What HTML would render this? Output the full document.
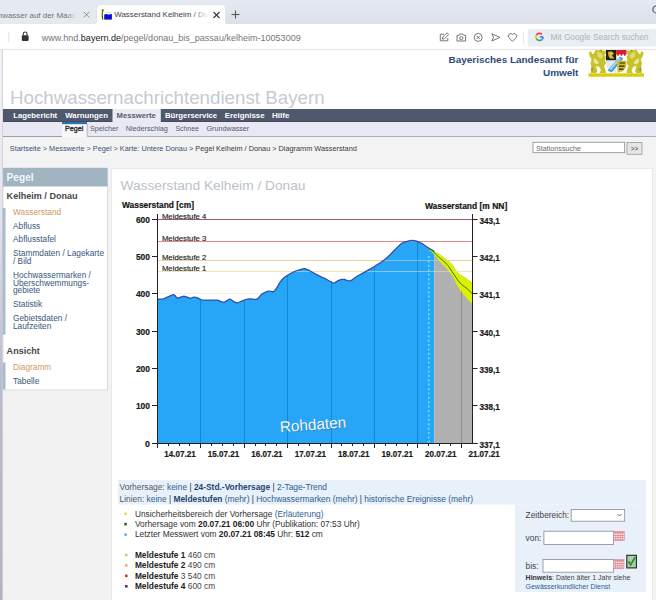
<!DOCTYPE html>
<html><head><meta charset="utf-8"><title>Wasserstand Kelheim / Donau</title>
<style>
html,body{margin:0;padding:0;width:656px;height:600px;overflow:hidden;background:#f0f0f0}
svg{position:absolute;left:0;top:0;display:block}
text{font-family:"Liberation Sans", sans-serif;}
</style></head><body>
<svg width="656" height="600" viewBox="0 0 656 600">
<defs><linearGradient id="tabbg" x1="0" y1="0" x2="0" y2="1"><stop offset="0" stop-color="#e5e9f1"/><stop offset="1" stop-color="#dce1e9"/></linearGradient></defs>
<rect x="0" y="0" width="656" height="24.5" fill="url(#tabbg)" />
<rect x="0" y="7" width="96" height="17.5" fill="#e6e9ef" />
<path d="M95,24 Q97,24 97,21 L97,9 Q97,5 101,5 L221,5 Q225,5 225,9 L225,21 Q225,24 227,24 Z" fill="#ffffff" stroke="none" stroke-width="1" />
<defs><linearGradient id="fadeL" x1="0" x2="1"><stop offset="0.88" stop-color="#6e7178"/><stop offset="1" stop-color="#6e7178" stop-opacity="0"/></linearGradient><linearGradient id="fadeA" x1="0" x2="1"><stop offset="0.82" stop-color="#3c4043"/><stop offset="1" stop-color="#3c4043" stop-opacity="0"/></linearGradient></defs>
<text x="-2.2" y="17.5" font-size="7.9" fill="url(#fadeL)" text-anchor="start" textLength="78" lengthAdjust="spacingAndGlyphs" ><tspan>hwasser auf der Maas</tspan></text>
<line x1="83.8" y1="12.0" x2="89.2" y2="17.4" stroke="#80838a" stroke-width="0.9" />
<line x1="89.2" y1="12.0" x2="83.8" y2="17.4" stroke="#80838a" stroke-width="0.9" />
<rect x="105" y="12" width="7" height="2.2" fill="#d8f4e8" />
<rect x="104.2" y="14" width="7.7" height="5.6" fill="#0a10d8" />
<path d="M104.2,14.8 Q105.5,13.6 107,14.2 Q108.5,14.8 111.9,14 L111.9,13.6 L104.2,13.6Z" fill="#ffffff" stroke="none" stroke-width="1" />
<path d="M100.8,10 L102.5,9 L104,9.5 L103.2,12 L102.8,15 L103.6,19.8 L101.6,19.8 L101.2,15 Z" fill="#e8f070" stroke="none" stroke-width="1" />
<path d="M102.2,9.4 L103.8,9.6 L103,12 L102.6,15 L103.3,19.6 L102.2,19.6 L101.8,15 L102.3,11.5 Z" fill="#3a3a08" stroke="none" stroke-width="1" />
<text x="114.2" y="17.4" font-size="7.97" fill="url(#fadeA)" text-anchor="start" textLength="94" lengthAdjust="spacingAndGlyphs" ><tspan>Wasserstand Kelheim / Do</tspan></text>
<line x1="213.5" y1="12" x2="219.5" y2="18" stroke="#3c4043" stroke-width="1.2" />
<line x1="219.5" y1="12" x2="213.5" y2="18" stroke="#3c4043" stroke-width="1.2" />
<line x1="235.5" y1="10.5" x2="235.5" y2="18.5" stroke="#55595e" stroke-width="1.1" />
<line x1="231.5" y1="14.5" x2="239.5" y2="14.5" stroke="#55595e" stroke-width="1.1" />
<path d="M656.5,5.8 A3.6,3.6 0 0 0 656.5,13" fill="none" stroke="#55595e" stroke-width="1.2" />
<rect x="0" y="24" width="656" height="26" fill="#ffffff" />
<rect x="0" y="49.3" width="656" height="1.2" fill="#d6d7da" />
<line x1="8.7" y1="32" x2="8.7" y2="42" stroke="#e2e3e5" stroke-width="1" />
<path d="M23.3,35.5 L23.3,33.8 A1.85,1.85 0 0 1 27,33.8 L27,35.5" fill="none" stroke="#3a3a3a" stroke-width="1.1" />
<rect x="21.8" y="35.3" width="6.8" height="5.6" fill="#333333" rx="0.8"/>
<text x="41.7" y="40.5" font-size="9.0" fill="#333" text-anchor="start" textLength="259" lengthAdjust="spacingAndGlyphs" ><tspan fill="#767676">www.hnd.</tspan><tspan fill="#202124">bayern.de</tspan><tspan fill="#767676">/pegel/donau_bis_passau/kelheim-10053009</tspan></text>
<path d="M444,34.2 L440.3,34.2 L440.3,40.8 L447.8,40.8 L447.8,38" fill="none" stroke="#6c7075" stroke-width="0.95" />
<path d="M442.3,39.2 L442.8,37 L447,32.8 L448.7,34.5 L444.5,38.7 Z" fill="none" stroke="#6c7075" stroke-width="0.95" stroke-linejoin="round"/>
<path d="M457,35.4 L458.8,35.4 L459.8,34 L462.8,34 L463.8,35.4 L465.6,35.4 L465.6,41 L457,41 Z" fill="none" stroke="#6c7075" stroke-width="0.95" stroke-linejoin="round"/>
<circle cx="461.3" cy="38.1" r="1.6" fill="none" stroke="#6c7075" stroke-width="0.95"/>
<circle cx="478.2" cy="37.4" r="4.0" fill="none" stroke="#6c7075" stroke-width="0.95"/>
<line x1="476.6" y1="35.8" x2="479.8" y2="39.0" stroke="#6c7075" stroke-width="0.95" />
<line x1="479.8" y1="35.8" x2="476.6" y2="39.0" stroke="#6c7075" stroke-width="0.95" />
<path d="M491.8,33.8 L500,37.4 L491.8,41 L493.6,37.4 Z" fill="none" stroke="#6c7075" stroke-width="0.95" stroke-linejoin="round"/>
<path d="M512.5,41.4 L508.8,37.6 A2.2,2.2 0 0 1 512.5,34.5 A2.2,2.2 0 0 1 516.2,37.6 Z" fill="none" stroke="#6c7075" stroke-width="0.95" stroke-linejoin="round"/>
<line x1="523.5" y1="32" x2="523.5" y2="43" stroke="#e6e7e9" stroke-width="1" />
<rect x="528" y="28.9" width="128" height="17.7" fill="#e9edf4" rx="1"/>
<g transform="translate(539.5,36.9) scale(1.2)"><path d="M3.1,0 L0.2,0" fill="none" stroke="#4285f4" stroke-width="1.4"/><path d="M3.0,0 A3,3 0 0 1 2.1,2.15" fill="none" stroke="#4285f4" stroke-width="1.4"/><path d="M2.1,-2.15 A3,3 0 0 0 -2.6,-1.5" fill="none" stroke="#ea4335" stroke-width="1.4"/><path d="M-2.6,-1.5 A3,3 0 0 0 -2.6,1.5" fill="none" stroke="#fbbc05" stroke-width="1.4"/><path d="M-2.6,1.5 A3,3 0 0 0 2.1,2.15" fill="none" stroke="#34a853" stroke-width="1.4"/></g>
<text x="550.5" y="40.0" font-size="8.3" fill="#b0b4ba" text-anchor="start" textLength="98" lengthAdjust="spacingAndGlyphs" ><tspan>Mit Google Search suchen</tspan></text>
<rect x="0" y="50" width="656" height="550" fill="#f2f2f2" />
<defs><linearGradient id="lstrip" x1="0" y1="0" x2="0" y2="1"><stop offset="0" stop-color="#f2f2f6"/><stop offset="0.3" stop-color="#e4e4ec"/><stop offset="0.6" stop-color="#bcbccb"/><stop offset="1" stop-color="#b2b2c2"/></linearGradient></defs>
<rect x="0" y="50" width="2.3" height="550" fill="url(#lstrip)" />
<rect x="2.3" y="50" width="0.8" height="550" fill="#c8c8d4" />
<rect x="3" y="50" width="653" height="59" fill="#ffffff" />
<text x="10.0" y="104" font-size="18.6" fill="#c6cad2" text-anchor="start" textLength="314.6" lengthAdjust="spacingAndGlyphs" ><tspan>Hochwassernachrichtendienst Bayern</tspan></text>
<text x="578.4" y="62.9" font-size="9.95" fill="#2b4a78" text-anchor="end" font-weight="700"><tspan>Bayerisches Landesamt für</tspan></text>
<text x="578.4" y="76" font-size="9.95" fill="#2b4a78" text-anchor="end" font-weight="700"><tspan>Umwelt</tspan></text>
<g><rect x="588.5" y="73.4" width="55.5" height="3.3" fill="#dccc08"/><path d="M596,49.8 L599,50.5 L601,49.8 L603,50.8 L605.5,50.5 L606,53 L604.5,55 L606,57 L605,60 L606,63 L604,66 L605.5,70 L606,73.3 L599.5,73.3 L601,70 L599,66.5 L596.5,68 L597.5,71 L596,73.3 L590.5,73.3 L592.5,69 L590.5,64 L591.5,59 L589.5,56 L589,52.5 L591,51 L592.5,54.5 L594,53 Z" fill="#c8c22a"/><path d="M597,52 L601,53 L603,56 L601,59 L598,57 Z" fill="#e2dc6a"/><path d="M594,58 L597,60 L599,63 L596,64.5 L593.5,62 Z" fill="#ece69a"/><path d="M596,66 L599,66.5 L598,70 L596.5,69 Z" fill="#f4f2d8"/><path d="M591.5,66 L593.5,69 L592.5,72 L590.8,71 Z" fill="#a89e22"/><path d="M599,50 L602,50 L601.5,52 Z" fill="#b89018"/><g transform="translate(1232.5,0) scale(-1,1)"><path d="M596,49.8 L599,50.5 L601,49.8 L603,50.8 L605.5,50.5 L606,53 L604.5,55 L606,57 L605,60 L606,63 L604,66 L605.5,70 L606,73.3 L599.5,73.3 L601,70 L599,66.5 L596.5,68 L597.5,71 L596,73.3 L590.5,73.3 L592.5,69 L590.5,64 L591.5,59 L589.5,56 L589,52.5 L591,51 L592.5,54.5 L594,53 Z" fill="#c8c22a"/><path d="M597,52 L601,53 L603,56 L601,59 L598,57 Z" fill="#e2dc6a"/><path d="M594,58 L597,60 L599,63 L596,64.5 L593.5,62 Z" fill="#ece69a"/><path d="M596,66 L599,66.5 L598,70 L596.5,69 Z" fill="#f4f2d8"/><path d="M591.5,66 L593.5,69 L592.5,72 L590.8,71 Z" fill="#a89e22"/><path d="M599,50 L602,50 L601.5,52 Z" fill="#b89018"/></g><path d="M606,50 L626.5,50 L626.5,64 Q626.5,71.5 616.2,73 Q606,71.5 606,64 Z" fill="#ffffff"/><rect x="606" y="50" width="10.2" height="10.5" fill="#262014"/><path d="M608,52 L611.5,51.3 L614,53.5 L612,55.5 L614.5,58.5 L610,58.5 L608.5,56 Z" fill="#d4bc3a"/><path d="M616.2,50 L626.5,50 L626.5,53.8 L624.8,56.3 L623.1,53.8 L621.4,56.3 L619.7,53.8 L618,56.3 L616.2,53.8 Z" fill="#dc1a30"/><path d="M606,60.5 L616.2,60.5 L616.2,73 Q606,71.5 606,64 Z" fill="#dfeaf4"/><path d="M607.5,70.5 L620,56.5 L623.5,58.5 L611.5,72.5 Z" fill="#4a9ed8"/><path d="M609.5,69 L619.5,58 L620.8,59 L610.8,70 Z" fill="#b6dcf2"/><path d="M616.8,60.8 L626.5,60.8 L626.5,64 Q626.5,71.5 617.5,72.8 Z" fill="#d2bc2c"/><path d="M619.5,63 L625,63 M619,66.2 L624.5,66.2 M619,69.2 L623.5,69.2" stroke="#2a2418" stroke-width="1.2"/></g>
<rect x="3" y="109" width="653" height="13" fill="#50586e" />
<rect x="3" y="121" width="653" height="1" fill="#434a5c" />
<rect x="112.5" y="109" width="48.3" height="13" fill="#e8eaf4" />
<text x="13.3" y="118.3" font-size="7.75" fill="#ffffff" text-anchor="start" textLength="43.9" lengthAdjust="spacingAndGlyphs" font-weight="700"><tspan>Lagebericht</tspan></text>
<text x="65.2" y="118.3" font-size="7.75" fill="#ffffff" text-anchor="start" textLength="42.8" lengthAdjust="spacingAndGlyphs" font-weight="700"><tspan>Warnungen</tspan></text>
<text x="116.6" y="118.3" font-size="7.75" fill="#585c66" text-anchor="start" textLength="39.3" lengthAdjust="spacingAndGlyphs" font-weight="700"><tspan>Messwerte</tspan></text>
<text x="165" y="118.3" font-size="7.75" fill="#ffffff" text-anchor="start" textLength="52.2" lengthAdjust="spacingAndGlyphs" font-weight="700"><tspan>Bürgerservice</tspan></text>
<text x="224.8" y="118.3" font-size="7.75" fill="#ffffff" text-anchor="start" textLength="39.7" lengthAdjust="spacingAndGlyphs" font-weight="700"><tspan>Ereignisse</tspan></text>
<text x="272" y="118.3" font-size="7.75" fill="#ffffff" text-anchor="start" textLength="17.5" lengthAdjust="spacingAndGlyphs" font-weight="700"><tspan>Hilfe</tspan></text>
<rect x="3" y="122" width="653" height="14" fill="#e8e9f4" />
<rect x="3" y="136" width="59" height="1" fill="#9a9eaa" />
<rect x="88" y="136" width="568" height="1" fill="#a8acb8" />
<rect x="62" y="122" width="25" height="2.4" fill="#2a70b4" />
<rect x="62" y="124.4" width="25" height="12.6" fill="#f8f8fb" />
<rect x="86.6" y="124" width="1.6" height="13" fill="#c0c3cc" />
<text x="65" y="131.3" font-size="7.2" fill="#2a2a2a" text-anchor="start" textLength="18.4" lengthAdjust="spacingAndGlyphs" stroke="#2a2a2a" stroke-width="0.3"><tspan>Pegel</tspan></text>
<text x="90" y="131.3" font-size="7.2" fill="#555a66" text-anchor="start" textLength="28.4" lengthAdjust="spacingAndGlyphs" ><tspan>Speicher</tspan></text>
<text x="125.7" y="131.3" font-size="7.2" fill="#555a66" text-anchor="start" textLength="42.1" lengthAdjust="spacingAndGlyphs" ><tspan>Niederschlag</tspan></text>
<text x="175.4" y="131.3" font-size="7.2" fill="#555a66" text-anchor="start" textLength="23.5" lengthAdjust="spacingAndGlyphs" ><tspan>Schnee</tspan></text>
<text x="206.5" y="131.3" font-size="7.2" fill="#555a66" text-anchor="start" textLength="42.7" lengthAdjust="spacingAndGlyphs" ><tspan>Grundwasser</tspan></text>
<rect x="3" y="137" width="653" height="31" fill="#f3f3f3" />
<text x="9.8" y="150.8" font-size="7.32" fill="#333" text-anchor="start" textLength="347" lengthAdjust="spacingAndGlyphs" ><tspan fill="#34537a">Startseite</tspan><tspan fill="#555"> &gt; </tspan><tspan fill="#34537a">Messwerte</tspan><tspan fill="#555"> &gt; </tspan><tspan fill="#34537a">Pegel</tspan><tspan fill="#555"> &gt; </tspan><tspan fill="#34537a">Karte: Untere Donau</tspan><tspan fill="#3a3a3a"> &gt; Pegel Kelheim / Donau &gt; Diagramm Wasserstand</tspan></text>
<rect x="533" y="142.3" width="91.7" height="10.4" fill="#ffffff" stroke="#8a8a8a" stroke-width="0.8"/>
<text x="536" y="150.5" font-size="7.16" fill="#6a6a6a" text-anchor="start" textLength="45" lengthAdjust="spacingAndGlyphs" ><tspan>Stationssuche</tspan></text>
<rect x="627" y="142.5" width="15" height="11.8" fill="#e6e6e6" stroke="#9a9a9a" stroke-width="0.8"/>
<text x="634.5" y="150.8" font-size="6.5" fill="#333" text-anchor="middle" ><tspan>&gt;&gt;</tspan></text>
<rect x="3" y="168" width="104.5" height="222" fill="#ffffff" stroke="#d6d6d6" stroke-width="0.8"/>
<rect x="3" y="168" width="104.5" height="18.5" fill="#a0b4c2" />
<text x="6.6" y="181.2" font-size="10.1" fill="#f4f7fa" text-anchor="start" textLength="27" lengthAdjust="spacingAndGlyphs" font-weight="700"><tspan>Pegel</tspan></text>
<text x="6.6" y="199" font-size="9.05" fill="#474747" text-anchor="start" textLength="71" lengthAdjust="spacingAndGlyphs" font-weight="700"><tspan>Kelheim / Donau</tspan></text>
<rect x="2.5" y="208" width="3" height="126.5" fill="#a9bccc" />
<text x="13" y="215.4" font-size="8.3" fill="#cc9a60" text-anchor="start" textLength="48.2" lengthAdjust="spacingAndGlyphs" ><tspan>Wasserstand</tspan></text>
<text x="13" y="228.9" font-size="8.3" fill="#36587c" text-anchor="start" ><tspan>Abfluss</tspan></text>
<text x="13" y="242.3" font-size="8.3" fill="#36587c" text-anchor="start" ><tspan>Abflusstafel</tspan></text>
<text x="13" y="256.2" font-size="8.3" fill="#36587c" text-anchor="start" textLength="91" lengthAdjust="spacingAndGlyphs" ><tspan>Stammdaten / Lagekarte</tspan></text>
<text x="13" y="264.1" font-size="8.3" fill="#36587c" text-anchor="start" ><tspan>/ Bild</tspan></text>
<text x="13" y="278.4" font-size="8.3" fill="#36587c" text-anchor="start" ><tspan>Hochwassermarken /</tspan></text>
<text x="13" y="286.0" font-size="8.3" fill="#36587c" text-anchor="start" ><tspan>Überschwemmungs-</tspan></text>
<text x="13" y="293.2" font-size="8.3" fill="#36587c" text-anchor="start" ><tspan>gebiete</tspan></text>
<text x="13" y="307.0" font-size="8.3" fill="#36587c" text-anchor="start" ><tspan>Statistik</tspan></text>
<text x="13" y="321.2" font-size="8.3" fill="#36587c" text-anchor="start" ><tspan>Gebietsdaten /</tspan></text>
<text x="13" y="328.8" font-size="8.3" fill="#36587c" text-anchor="start" ><tspan>Laufzeiten</tspan></text>
<text x="6.6" y="353.5" font-size="9.05" fill="#474747" text-anchor="start" font-weight="700"><tspan>Ansicht</tspan></text>
<rect x="2.5" y="362.5" width="3" height="27" fill="#a9bccc" />
<text x="13" y="369.5" font-size="8.3" fill="#cc9a60" text-anchor="start" ><tspan>Diagramm</tspan></text>
<text x="13" y="383.5" font-size="8.3" fill="#36587c" text-anchor="start" ><tspan>Tabelle</tspan></text>
<rect x="111.5" y="168.5" width="541" height="440" fill="#ffffff" stroke="#e6e6e6" stroke-width="0.8"/>
<text x="120.5" y="189.7" font-size="13.7" fill="#bac1c9" text-anchor="start" textLength="185" lengthAdjust="spacingAndGlyphs" ><tspan>Wasserstand Kelheim / Donau</tspan></text>
<clipPath id="plot"><rect x="157" y="200" width="315.5" height="243.5"/></clipPath>
<g clip-path="url(#plot)">
<line x1="157" y1="219.5" x2="472.5" y2="219.5" stroke="#9a5a80" stroke-width="1" />
<line x1="157" y1="241.5" x2="472.5" y2="241.5" stroke="#e48888" stroke-width="1" />
<line x1="157" y1="260.5" x2="472.5" y2="260.5" stroke="#ecd49c" stroke-width="1" />
<line x1="157" y1="271.5" x2="472.5" y2="271.5" stroke="#f0e6b4" stroke-width="1" />
<line x1="157" y1="293.5" x2="472.5" y2="293.5" stroke="#f6eee6" stroke-width="1" />
<path d="M157.30,299.10 C158.18,299.10 161.08,299.35 162.60,299.10 C164.12,298.85 164.68,298.30 166.40,297.60 C168.12,296.90 171.50,295.28 172.90,294.90 C174.30,294.52 174.03,294.78 174.80,295.30 C175.57,295.82 176.10,297.83 177.50,298.00 C178.90,298.17 181.75,296.50 183.20,296.30 C184.65,296.10 185.05,296.47 186.20,296.80 C187.35,297.13 188.82,298.23 190.10,298.30 C191.38,298.37 192.77,297.32 193.90,297.20 C195.03,297.08 195.77,297.22 196.90,297.60 C198.03,297.98 199.55,299.07 200.70,299.50 C201.85,299.93 201.00,300.08 203.80,300.20 C206.60,300.32 214.45,299.88 217.50,300.20 C220.55,300.52 220.82,301.83 222.10,302.10 C223.38,302.37 223.93,302.30 225.20,301.80 C226.47,301.30 228.32,299.17 229.70,299.10 C231.08,299.03 232.23,300.77 233.50,301.40 C234.77,302.03 236.02,302.90 237.30,302.90 C238.58,302.90 239.80,301.97 241.20,301.40 C242.60,300.83 244.23,299.93 245.70,299.50 C247.17,299.07 248.13,298.85 250.00,298.80 C251.87,298.75 255.00,299.90 256.90,299.20 C258.80,298.50 260.02,295.75 261.40,294.60 C262.78,293.45 263.92,292.87 265.20,292.30 C266.48,291.73 267.70,291.32 269.10,291.20 C270.50,291.08 272.33,292.17 273.60,291.60 C274.87,291.03 275.55,289.45 276.70,287.80 C277.85,286.15 279.23,283.42 280.50,281.70 C281.77,279.98 282.78,278.77 284.30,277.50 C285.82,276.23 287.70,275.18 289.60,274.10 C291.50,273.02 294.03,271.70 295.70,271.00 C297.37,270.30 298.13,270.28 299.60,269.90 C301.07,269.52 302.73,268.52 304.50,268.70 C306.27,268.88 308.23,270.05 310.20,271.00 C312.17,271.95 314.00,273.20 316.30,274.40 C318.60,275.60 321.58,276.98 324.00,278.20 C326.42,279.42 329.15,280.87 330.80,281.70 C332.45,282.53 332.75,283.33 333.90,283.20 C335.05,283.07 336.30,281.53 337.70,280.90 C339.10,280.27 341.15,279.63 342.30,279.40 C343.45,279.17 343.30,279.25 344.60,279.50 C345.90,279.75 348.27,281.28 350.10,280.90 C351.93,280.52 353.47,278.50 355.60,277.20 C357.73,275.90 360.60,274.40 362.90,273.10 C365.20,271.80 367.40,270.55 369.40,269.40 C371.40,268.25 372.77,267.50 374.90,266.20 C377.03,264.90 379.75,263.43 382.20,261.60 C384.65,259.77 387.48,257.17 389.60,255.20 C391.72,253.23 392.87,251.78 394.90,249.80 C396.93,247.82 399.77,244.72 401.80,243.30 C403.83,241.88 405.33,241.80 407.10,241.30 C408.87,240.80 410.75,240.30 412.40,240.30 C414.05,240.30 415.47,240.80 417.00,241.30 C418.53,241.80 419.82,242.27 421.60,243.30 C423.38,244.33 425.58,246.13 427.70,247.50 C429.82,248.87 433.20,250.83 434.30,251.50 L434.3,443.3 L157,443.3 L157,299.1 Z" fill="#27a6f8"/>
<path d="M434.3,251.19 L439.20,254.00 C440.75,255.17 446.17,259.05 448.50,261.00 C450.83,262.95 451.65,263.75 453.20,265.70 C454.75,267.65 455.87,270.77 457.80,272.70 C459.73,274.63 462.27,275.55 464.80,277.30 C467.33,279.05 471.63,282.22 473.00,283.20 L473,443.3 L434.3,443.3 Z" fill="#b0b0b0"/>
<path d="M427.70,247.00 C428.25,247.38 429.08,248.13 431.00,249.30 C432.92,250.47 436.28,252.05 439.20,254.00 C442.12,255.95 446.17,259.05 448.50,261.00 C450.83,262.95 451.65,263.75 453.20,265.70 C454.75,267.65 455.87,270.77 457.80,272.70 C459.73,274.63 462.27,275.55 464.80,277.30 C467.33,279.05 471.63,282.22 473.00,283.20 L473.00,304.80 C471.45,303.13 466.23,297.82 463.70,294.80 C461.17,291.78 459.55,289.62 457.80,286.70 C456.05,283.78 454.95,280.22 453.20,277.30 C451.45,274.38 449.45,271.72 447.30,269.20 C445.15,266.68 442.47,264.63 440.30,262.20 C438.13,259.77 436.02,256.55 434.30,254.60 C432.58,252.65 431.10,251.60 430.00,250.50 C428.90,249.40 428.08,248.42 427.70,248.00 Z" fill="#dcf000"/>
<line x1="200.5" y1="299.50967741935483" x2="200.5" y2="443.3" stroke="#1585d5" stroke-width="1" />
<line x1="244.5" y1="300.13936507936506" x2="244.5" y2="443.3" stroke="#1585d5" stroke-width="1" />
<line x1="287.5" y1="275.3646900269542" x2="287.5" y2="443.3" stroke="#1585d5" stroke-width="1" />
<line x1="331.5" y1="281.83133640552995" x2="331.5" y2="443.3" stroke="#1585d5" stroke-width="1" />
<line x1="374.5" y1="266.42441558441556" x2="374.5" y2="443.3" stroke="#1585d5" stroke-width="1" />
<line x1="417.5" y1="241.71614906832298" x2="417.5" y2="443.3" stroke="#1585d5" stroke-width="1" />
<line x1="461.5" y1="291.6423728813559" x2="461.5" y2="443.3" stroke="#8e8e8e" stroke-width="1" />
<line x1="157" y1="219.5" x2="472.5" y2="219.5" stroke="#9a5a80" stroke-width="1" opacity="0.5"/>
<line x1="157" y1="241.5" x2="472.5" y2="241.5" stroke="#e48888" stroke-width="1" opacity="0.5"/>
<line x1="157" y1="260.5" x2="472.5" y2="260.5" stroke="#ecd49c" stroke-width="1" opacity="0.5"/>
<line x1="157" y1="271.5" x2="472.5" y2="271.5" stroke="#f0e6b4" stroke-width="1" opacity="0.5"/>
<path d="M157.30,299.10 C158.18,299.10 161.08,299.35 162.60,299.10 C164.12,298.85 164.68,298.30 166.40,297.60 C168.12,296.90 171.50,295.28 172.90,294.90 C174.30,294.52 174.03,294.78 174.80,295.30 C175.57,295.82 176.10,297.83 177.50,298.00 C178.90,298.17 181.75,296.50 183.20,296.30 C184.65,296.10 185.05,296.47 186.20,296.80 C187.35,297.13 188.82,298.23 190.10,298.30 C191.38,298.37 192.77,297.32 193.90,297.20 C195.03,297.08 195.77,297.22 196.90,297.60 C198.03,297.98 199.55,299.07 200.70,299.50 C201.85,299.93 201.00,300.08 203.80,300.20 C206.60,300.32 214.45,299.88 217.50,300.20 C220.55,300.52 220.82,301.83 222.10,302.10 C223.38,302.37 223.93,302.30 225.20,301.80 C226.47,301.30 228.32,299.17 229.70,299.10 C231.08,299.03 232.23,300.77 233.50,301.40 C234.77,302.03 236.02,302.90 237.30,302.90 C238.58,302.90 239.80,301.97 241.20,301.40 C242.60,300.83 244.23,299.93 245.70,299.50 C247.17,299.07 248.13,298.85 250.00,298.80 C251.87,298.75 255.00,299.90 256.90,299.20 C258.80,298.50 260.02,295.75 261.40,294.60 C262.78,293.45 263.92,292.87 265.20,292.30 C266.48,291.73 267.70,291.32 269.10,291.20 C270.50,291.08 272.33,292.17 273.60,291.60 C274.87,291.03 275.55,289.45 276.70,287.80 C277.85,286.15 279.23,283.42 280.50,281.70 C281.77,279.98 282.78,278.77 284.30,277.50 C285.82,276.23 287.70,275.18 289.60,274.10 C291.50,273.02 294.03,271.70 295.70,271.00 C297.37,270.30 298.13,270.28 299.60,269.90 C301.07,269.52 302.73,268.52 304.50,268.70 C306.27,268.88 308.23,270.05 310.20,271.00 C312.17,271.95 314.00,273.20 316.30,274.40 C318.60,275.60 321.58,276.98 324.00,278.20 C326.42,279.42 329.15,280.87 330.80,281.70 C332.45,282.53 332.75,283.33 333.90,283.20 C335.05,283.07 336.30,281.53 337.70,280.90 C339.10,280.27 341.15,279.63 342.30,279.40 C343.45,279.17 343.30,279.25 344.60,279.50 C345.90,279.75 348.27,281.28 350.10,280.90 C351.93,280.52 353.47,278.50 355.60,277.20 C357.73,275.90 360.60,274.40 362.90,273.10 C365.20,271.80 367.40,270.55 369.40,269.40 C371.40,268.25 372.77,267.50 374.90,266.20 C377.03,264.90 379.75,263.43 382.20,261.60 C384.65,259.77 387.48,257.17 389.60,255.20 C391.72,253.23 392.87,251.78 394.90,249.80 C396.93,247.82 399.77,244.72 401.80,243.30 C403.83,241.88 405.33,241.80 407.10,241.30 C408.87,240.80 410.75,240.30 412.40,240.30 C414.05,240.30 415.47,240.80 417.00,241.30 C418.53,241.80 419.82,242.27 421.60,243.30 C423.38,244.33 425.58,246.13 427.70,247.50 C429.82,248.87 433.20,250.83 434.30,251.50" fill="none" stroke="#2a52aa" stroke-width="1.3"/>
<path d="M427.70,247.50 C428.55,248.10 430.88,249.43 432.80,251.10 C434.72,252.77 437.07,255.55 439.20,257.50 C441.33,259.45 443.85,261.05 445.60,262.80 C447.35,264.55 448.25,265.97 449.70,268.00 C451.15,270.03 452.55,272.47 454.30,275.00 C456.05,277.53 458.25,281.07 460.20,283.20 C462.15,285.33 463.87,285.97 466.00,287.80 C468.13,289.63 471.83,293.13 473.00,294.20" fill="none" stroke="#2d6e1e" stroke-width="0.95"/>
<line x1="428.8" y1="256" x2="428.8" y2="443.3" stroke="#7ce4f4" stroke-width="1.3" stroke-dasharray="2.2,2.2"/>
</g>
<text x="281.1" y="433.1" font-size="15.3" fill="#3d6080" opacity="0.55" transform="rotate(-4.3 281.1 433.1)" textLength="66.5" lengthAdjust="spacingAndGlyphs">Rohdaten</text>
<text x="280.3" y="432.3" font-size="15.3" fill="#f6f9fc" transform="rotate(-4.3 280.3 432.3)" textLength="66.5" lengthAdjust="spacingAndGlyphs">Rohdaten</text>
<line x1="157.5" y1="214" x2="157.5" y2="448" stroke="#222" stroke-width="1" />
<line x1="472.5" y1="214" x2="472.5" y2="443.5" stroke="#222" stroke-width="1" />
<line x1="152" y1="443.5" x2="477.5" y2="443.5" stroke="#222" stroke-width="1" />
<line x1="152" y1="443.5" x2="157.5" y2="443.5" stroke="#222" stroke-width="1" />
<line x1="472.5" y1="443.5" x2="477.5" y2="443.5" stroke="#222" stroke-width="1" />
<text x="150" y="446.8" font-size="8.8" fill="#1a1a1a" text-anchor="end" font-weight="700" stroke="#1a1a1a" stroke-width="0.2"><tspan>0</tspan></text>
<text x="479.5" y="447.8" font-size="8.7" fill="#1a1a1a" text-anchor="start" textLength="20.4" lengthAdjust="spacingAndGlyphs" font-weight="700" stroke="#1a1a1a" stroke-width="0.2"><tspan>337,1</tspan></text>
<line x1="152" y1="405.5" x2="157.5" y2="405.5" stroke="#222" stroke-width="1" />
<line x1="472.5" y1="405.5" x2="477.5" y2="405.5" stroke="#222" stroke-width="1" />
<text x="150" y="408.8" font-size="8.8" fill="#1a1a1a" text-anchor="end" textLength="14.1" lengthAdjust="spacingAndGlyphs" font-weight="700" stroke="#1a1a1a" stroke-width="0.2"><tspan>100</tspan></text>
<text x="479.5" y="409.8" font-size="8.7" fill="#1a1a1a" text-anchor="start" textLength="20.4" lengthAdjust="spacingAndGlyphs" font-weight="700" stroke="#1a1a1a" stroke-width="0.2"><tspan>338,1</tspan></text>
<line x1="152" y1="368.5" x2="157.5" y2="368.5" stroke="#222" stroke-width="1" />
<line x1="472.5" y1="368.5" x2="477.5" y2="368.5" stroke="#222" stroke-width="1" />
<text x="150" y="371.8" font-size="8.8" fill="#1a1a1a" text-anchor="end" textLength="14.1" lengthAdjust="spacingAndGlyphs" font-weight="700" stroke="#1a1a1a" stroke-width="0.2"><tspan>200</tspan></text>
<text x="479.5" y="372.8" font-size="8.7" fill="#1a1a1a" text-anchor="start" textLength="20.4" lengthAdjust="spacingAndGlyphs" font-weight="700" stroke="#1a1a1a" stroke-width="0.2"><tspan>339,1</tspan></text>
<line x1="152" y1="331.5" x2="157.5" y2="331.5" stroke="#222" stroke-width="1" />
<line x1="472.5" y1="331.5" x2="477.5" y2="331.5" stroke="#222" stroke-width="1" />
<text x="150" y="334.8" font-size="8.8" fill="#1a1a1a" text-anchor="end" textLength="14.1" lengthAdjust="spacingAndGlyphs" font-weight="700" stroke="#1a1a1a" stroke-width="0.2"><tspan>300</tspan></text>
<text x="479.5" y="335.8" font-size="8.7" fill="#1a1a1a" text-anchor="start" textLength="20.4" lengthAdjust="spacingAndGlyphs" font-weight="700" stroke="#1a1a1a" stroke-width="0.2"><tspan>340,1</tspan></text>
<line x1="152" y1="293.5" x2="157.5" y2="293.5" stroke="#222" stroke-width="1" />
<line x1="472.5" y1="293.5" x2="477.5" y2="293.5" stroke="#222" stroke-width="1" />
<text x="150" y="296.8" font-size="8.8" fill="#1a1a1a" text-anchor="end" textLength="14.1" lengthAdjust="spacingAndGlyphs" font-weight="700" stroke="#1a1a1a" stroke-width="0.2"><tspan>400</tspan></text>
<text x="479.5" y="297.8" font-size="8.7" fill="#1a1a1a" text-anchor="start" textLength="20.4" lengthAdjust="spacingAndGlyphs" font-weight="700" stroke="#1a1a1a" stroke-width="0.2"><tspan>341,1</tspan></text>
<line x1="152" y1="256.5" x2="157.5" y2="256.5" stroke="#222" stroke-width="1" />
<line x1="472.5" y1="256.5" x2="477.5" y2="256.5" stroke="#222" stroke-width="1" />
<text x="150" y="259.8" font-size="8.8" fill="#1a1a1a" text-anchor="end" textLength="14.1" lengthAdjust="spacingAndGlyphs" font-weight="700" stroke="#1a1a1a" stroke-width="0.2"><tspan>500</tspan></text>
<text x="479.5" y="260.8" font-size="8.7" fill="#1a1a1a" text-anchor="start" textLength="20.4" lengthAdjust="spacingAndGlyphs" font-weight="700" stroke="#1a1a1a" stroke-width="0.2"><tspan>342,1</tspan></text>
<line x1="152" y1="219.5" x2="157.5" y2="219.5" stroke="#222" stroke-width="1" />
<line x1="472.5" y1="219.5" x2="477.5" y2="219.5" stroke="#222" stroke-width="1" />
<text x="150" y="222.8" font-size="8.8" fill="#1a1a1a" text-anchor="end" textLength="14.1" lengthAdjust="spacingAndGlyphs" font-weight="700" stroke="#1a1a1a" stroke-width="0.2"><tspan>600</tspan></text>
<text x="479.5" y="223.8" font-size="8.7" fill="#1a1a1a" text-anchor="start" textLength="20.4" lengthAdjust="spacingAndGlyphs" font-weight="700" stroke="#1a1a1a" stroke-width="0.2"><tspan>343,1</tspan></text>
<line x1="157.5" y1="443.5" x2="157.5" y2="448" stroke="#222" stroke-width="1" />
<line x1="168.5" y1="443.5" x2="168.5" y2="446" stroke="#222" stroke-width="1" />
<line x1="179.5" y1="443.5" x2="179.5" y2="446" stroke="#222" stroke-width="1" />
<line x1="189.5" y1="443.5" x2="189.5" y2="446" stroke="#222" stroke-width="1" />
<line x1="200.5" y1="443.5" x2="200.5" y2="448" stroke="#222" stroke-width="1" />
<line x1="211.5" y1="443.5" x2="211.5" y2="446" stroke="#222" stroke-width="1" />
<line x1="222.5" y1="443.5" x2="222.5" y2="446" stroke="#222" stroke-width="1" />
<line x1="233.5" y1="443.5" x2="233.5" y2="446" stroke="#222" stroke-width="1" />
<line x1="244.5" y1="443.5" x2="244.5" y2="448" stroke="#222" stroke-width="1" />
<line x1="255.5" y1="443.5" x2="255.5" y2="446" stroke="#222" stroke-width="1" />
<line x1="265.5" y1="443.5" x2="265.5" y2="446" stroke="#222" stroke-width="1" />
<line x1="276.5" y1="443.5" x2="276.5" y2="446" stroke="#222" stroke-width="1" />
<line x1="287.5" y1="443.5" x2="287.5" y2="448" stroke="#222" stroke-width="1" />
<line x1="298.5" y1="443.5" x2="298.5" y2="446" stroke="#222" stroke-width="1" />
<line x1="309.5" y1="443.5" x2="309.5" y2="446" stroke="#222" stroke-width="1" />
<line x1="320.5" y1="443.5" x2="320.5" y2="446" stroke="#222" stroke-width="1" />
<line x1="331.5" y1="443.5" x2="331.5" y2="448" stroke="#222" stroke-width="1" />
<line x1="341.5" y1="443.5" x2="341.5" y2="446" stroke="#222" stroke-width="1" />
<line x1="352.5" y1="443.5" x2="352.5" y2="446" stroke="#222" stroke-width="1" />
<line x1="363.5" y1="443.5" x2="363.5" y2="446" stroke="#222" stroke-width="1" />
<line x1="374.5" y1="443.5" x2="374.5" y2="448" stroke="#222" stroke-width="1" />
<line x1="385.5" y1="443.5" x2="385.5" y2="446" stroke="#222" stroke-width="1" />
<line x1="396.5" y1="443.5" x2="396.5" y2="446" stroke="#222" stroke-width="1" />
<line x1="407.5" y1="443.5" x2="407.5" y2="446" stroke="#222" stroke-width="1" />
<line x1="417.5" y1="443.5" x2="417.5" y2="448" stroke="#222" stroke-width="1" />
<line x1="428.5" y1="443.5" x2="428.5" y2="446" stroke="#222" stroke-width="1" />
<line x1="439.5" y1="443.5" x2="439.5" y2="446" stroke="#222" stroke-width="1" />
<line x1="450.5" y1="443.5" x2="450.5" y2="446" stroke="#222" stroke-width="1" />
<line x1="461.5" y1="443.5" x2="461.5" y2="448" stroke="#222" stroke-width="1" />
<text x="180.02142857142857" y="456.6" font-size="8.5" fill="#1a1a1a" text-anchor="middle" textLength="31.4" lengthAdjust="spacingAndGlyphs" font-weight="700" stroke="#1a1a1a" stroke-width="0.2"><tspan>14.07.21</tspan></text>
<text x="223.46428571428572" y="456.6" font-size="8.5" fill="#1a1a1a" text-anchor="middle" textLength="31.4" lengthAdjust="spacingAndGlyphs" font-weight="700" stroke="#1a1a1a" stroke-width="0.2"><tspan>15.07.21</tspan></text>
<text x="266.90714285714284" y="456.6" font-size="8.5" fill="#1a1a1a" text-anchor="middle" textLength="31.4" lengthAdjust="spacingAndGlyphs" font-weight="700" stroke="#1a1a1a" stroke-width="0.2"><tspan>16.07.21</tspan></text>
<text x="310.35" y="456.6" font-size="8.5" fill="#1a1a1a" text-anchor="middle" textLength="31.4" lengthAdjust="spacingAndGlyphs" font-weight="700" stroke="#1a1a1a" stroke-width="0.2"><tspan>17.07.21</tspan></text>
<text x="353.7928571428571" y="456.6" font-size="8.5" fill="#1a1a1a" text-anchor="middle" textLength="31.4" lengthAdjust="spacingAndGlyphs" font-weight="700" stroke="#1a1a1a" stroke-width="0.2"><tspan>18.07.21</tspan></text>
<text x="397.23571428571427" y="456.6" font-size="8.5" fill="#1a1a1a" text-anchor="middle" textLength="31.4" lengthAdjust="spacingAndGlyphs" font-weight="700" stroke="#1a1a1a" stroke-width="0.2"><tspan>19.07.21</tspan></text>
<text x="440.6785714285714" y="456.6" font-size="8.5" fill="#1a1a1a" text-anchor="middle" textLength="31.4" lengthAdjust="spacingAndGlyphs" font-weight="700" stroke="#1a1a1a" stroke-width="0.2"><tspan>20.07.21</tspan></text>
<text x="484.1214285714285" y="456.6" font-size="8.5" fill="#1a1a1a" text-anchor="middle" textLength="31.4" lengthAdjust="spacingAndGlyphs" font-weight="700" stroke="#1a1a1a" stroke-width="0.2"><tspan>21.07.21</tspan></text>
<text x="122" y="208.2" font-size="8.9" fill="#141414" text-anchor="start" textLength="72" lengthAdjust="spacingAndGlyphs" font-weight="700" stroke="#141414" stroke-width="0.2"><tspan>Wasserstand [cm]</tspan></text>
<text x="424.9" y="208.6" font-size="8.9" fill="#141414" text-anchor="start" textLength="82.3" lengthAdjust="spacingAndGlyphs" font-weight="700" stroke="#141414" stroke-width="0.2"><tspan>Wasserstand [m NN]</tspan></text>
<text x="161.9" y="218.7" font-size="7.77" fill="#222222" text-anchor="start" textLength="44.5" lengthAdjust="spacingAndGlyphs" stroke="#222" stroke-width="0.15"><tspan>Meldestufe 4</tspan></text>
<text x="161.9" y="240.8" font-size="7.77" fill="#222222" text-anchor="start" textLength="44.5" lengthAdjust="spacingAndGlyphs" stroke="#222" stroke-width="0.15"><tspan>Meldestufe 3</tspan></text>
<text x="161.9" y="259.6" font-size="7.77" fill="#222222" text-anchor="start" textLength="44.5" lengthAdjust="spacingAndGlyphs" stroke="#222" stroke-width="0.15"><tspan>Meldestufe 2</tspan></text>
<text x="161.9" y="270.5" font-size="7.77" fill="#222222" text-anchor="start" textLength="44.5" lengthAdjust="spacingAndGlyphs" stroke="#222" stroke-width="0.15"><tspan>Meldestufe 1</tspan></text>
<rect x="118" y="480" width="528" height="24.5" fill="#e8f0fa" />
<rect x="515" y="504.5" width="131" height="87.5" fill="#e8f0fa" />
<text x="119.5" y="489.6" font-size="8.36" fill="#333" text-anchor="start" textLength="207.5" lengthAdjust="spacingAndGlyphs" ><tspan fill="#555a60">Vorhersage: </tspan><tspan fill="#2f5f8f">keine</tspan><tspan fill="#333"> | </tspan><tspan font-weight="700" fill="#23466e">24-Std.-Vorhersage</tspan><tspan fill="#333"> | </tspan><tspan fill="#2f5f8f">2-Tage-Trend</tspan></text>
<text x="119.5" y="501.9" font-size="8.36" fill="#333" text-anchor="start" textLength="353.5" lengthAdjust="spacingAndGlyphs" ><tspan fill="#555a60">Linien: </tspan><tspan fill="#2f5f8f">keine</tspan><tspan fill="#333"> | </tspan><tspan font-weight="700" fill="#23466e">Meldestufen</tspan><tspan fill="#2f5f8f"> (mehr)</tspan><tspan fill="#333"> | </tspan><tspan fill="#2f5f8f">Hochwassermarken (mehr)</tspan><tspan fill="#333"> | </tspan><tspan fill="#2f5f8f">historische Ereignisse (mehr)</tspan></text>
<rect x="124.3" y="512.5" width="2.6" height="2.6" fill="#e4dc50" />
<rect x="124.3" y="522.9" width="2.6" height="2.6" fill="#2d6a2d" />
<rect x="124.3" y="533.3" width="2.6" height="2.6" fill="#62b4e4" />
<text x="134.9" y="516.5" font-size="8.36" fill="#333" text-anchor="start" textLength="188.6" lengthAdjust="spacingAndGlyphs" ><tspan fill="#333">Unsicherheitsbereich der Vorhersage </tspan><tspan fill="#2f5f8f">(Erläuterung)</tspan></text>
<text x="134.9" y="526.9" font-size="8.36" fill="#333" text-anchor="start" textLength="225" lengthAdjust="spacingAndGlyphs" ><tspan fill="#333">Vorhersage vom </tspan><tspan font-weight="700" fill="#222">20.07.21 06:00</tspan><tspan fill="#333"> Uhr (Publikation: 07:53 Uhr)</tspan></text>
<text x="134.9" y="537.3" font-size="8.36" fill="#333" text-anchor="start" textLength="187.9" lengthAdjust="spacingAndGlyphs" ><tspan fill="#333">Letzter Messwert vom </tspan><tspan font-weight="700" fill="#222">20.07.21 08:45</tspan><tspan fill="#333"> Uhr: </tspan><tspan font-weight="700" fill="#222">512</tspan><tspan fill="#333"> cm</tspan></text>
<rect x="125" y="553.7" width="2.6" height="2.6" fill="#c4d478" />
<text x="134.9" y="557.7" font-size="8.36" fill="#333" text-anchor="start" ><tspan font-weight="700" fill="#222">Meldestufe 1</tspan><tspan fill="#444"> 460 cm</tspan></text>
<rect x="125" y="564.13" width="2.6" height="2.6" fill="#e8b060" />
<text x="134.9" y="568.13" font-size="8.36" fill="#333" text-anchor="start" ><tspan font-weight="700" fill="#222">Meldestufe 2</tspan><tspan fill="#444"> 490 cm</tspan></text>
<rect x="125" y="574.5600000000001" width="2.6" height="2.6" fill="#d03838" />
<text x="134.9" y="578.5600000000001" font-size="8.36" fill="#333" text-anchor="start" ><tspan font-weight="700" fill="#222">Meldestufe </tspan><tspan fill="#444">3 540 cm</tspan></text>
<rect x="125" y="584.99" width="2.6" height="2.6" fill="#6a2a6a" />
<text x="134.9" y="588.99" font-size="8.36" fill="#333" text-anchor="start" ><tspan font-weight="700" fill="#222">Meldestufe 4</tspan><tspan fill="#444"> 600 cm</tspan></text>
<text x="525.6" y="518.3" font-size="8.36" fill="#444" text-anchor="start" ><tspan>Zeitbereich:</tspan></text>
<rect x="571.2" y="509.4" width="53.5" height="11.8" fill="#ffffff" stroke="#8a8a8a" stroke-width="0.8"/>
<path d="M617.5,514 L619.5,516 L621.5,514" fill="none" stroke="#555" stroke-width="0.9" />
<text x="525.6" y="541.2" font-size="8.36" fill="#444" text-anchor="start" ><tspan>von:</tspan></text>
<rect x="543.9" y="531.2" width="69.7" height="13.3" fill="#ffffff" stroke="#8a8a8a" stroke-width="0.8"/>
<text x="525.6" y="568.8" font-size="8.36" fill="#444" text-anchor="start" ><tspan>bis:</tspan></text>
<rect x="543" y="559.5" width="70.6" height="12.7" fill="#ffffff" stroke="#8a8a8a" stroke-width="0.8"/>
<g><rect x="613.8" y="531.5" width="10.5" height="9" fill="#fbeef2" stroke="#d88a98" stroke-width="0.6"/><rect x="613.8" y="531.5" width="10.5" height="2" fill="#e68a98"/><line x1="615.8" y1="533.5" x2="615.8" y2="540.5" stroke="#d87888" stroke-width="0.7"/><line x1="618.0" y1="533.5" x2="618.0" y2="540.5" stroke="#d87888" stroke-width="0.7"/><line x1="620.1999999999999" y1="533.5" x2="620.1999999999999" y2="540.5" stroke="#d87888" stroke-width="0.7"/><line x1="622.4" y1="533.5" x2="622.4" y2="540.5" stroke="#d87888" stroke-width="0.7"/><line x1="613.8" y1="535.5" x2="624.3" y2="535.5" stroke="#d87888" stroke-width="0.7"/><line x1="613.8" y1="537.7" x2="624.3" y2="537.7" stroke="#d87888" stroke-width="0.7"/><line x1="613.8" y1="539.9" x2="624.3" y2="539.9" stroke="#d87888" stroke-width="0.7"/></g>
<g><rect x="613.4" y="559.6" width="10.5" height="9" fill="#fbeef2" stroke="#d88a98" stroke-width="0.6"/><rect x="613.4" y="559.6" width="10.5" height="2" fill="#e68a98"/><line x1="615.4" y1="561.6" x2="615.4" y2="568.6" stroke="#d87888" stroke-width="0.7"/><line x1="617.6" y1="561.6" x2="617.6" y2="568.6" stroke="#d87888" stroke-width="0.7"/><line x1="619.8" y1="561.6" x2="619.8" y2="568.6" stroke="#d87888" stroke-width="0.7"/><line x1="622.0" y1="561.6" x2="622.0" y2="568.6" stroke="#d87888" stroke-width="0.7"/><line x1="613.4" y1="563.6" x2="623.9" y2="563.6" stroke="#d87888" stroke-width="0.7"/><line x1="613.4" y1="565.8000000000001" x2="623.9" y2="565.8000000000001" stroke="#d87888" stroke-width="0.7"/><line x1="613.4" y1="568.0" x2="623.9" y2="568.0" stroke="#d87888" stroke-width="0.7"/></g>
<rect x="626.8" y="555.3" width="9.6" height="12.6" fill="#b4c8b4" stroke="#1e2a1e" stroke-width="1.1"/>
<path d="M628.4,561.2 L630.6,564.8 L635.2,557.2" fill="none" stroke="#18a018" stroke-width="1.7" />
<text x="525.6" y="580" font-size="7.13" fill="#333" text-anchor="start" textLength="104.7" lengthAdjust="spacingAndGlyphs" ><tspan font-weight="700" fill="#333">Hinweis</tspan><tspan fill="#444">: Daten älter 1 Jahr siehe</tspan></text>
<text x="525.6" y="588.9" font-size="6.95" fill="#2f5f8f" text-anchor="start" textLength="84.6" lengthAdjust="spacingAndGlyphs" ><tspan>Gewässerkundlicher Dienst</tspan></text>
</svg>
</body></html>
